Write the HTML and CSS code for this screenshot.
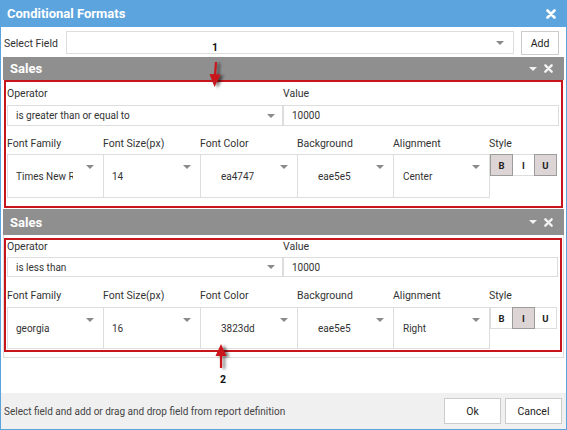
FILE: index.html
```html
<!DOCTYPE html>
<html>
<head>
<meta charset="utf-8">
<link rel="stylesheet" href="styles.css">
</head>
<body>
<div class="dialog">
  <div class="titlebar">
    <span class="title">Conditional Formats</span>
    <svg class="close" width="10" height="10" viewBox="0 0 10 10"><path d="M1.5 1.5 L8.5 8.5 M8.5 1.5 L1.5 8.5" stroke="#fff" stroke-width="2.6" stroke-linecap="round"/></svg>
  </div>
  <div class="content">
    <div class="field-row">
      <span class="field-label">Select Field</span>
      <div class="select field-select"><span class="caret"></span></div>
      <button class="btn add">Add</button>
    </div>

    <div class="section">
      <div class="section-head head1">
        <span class="head-title">Sales</span>
        <span class="head-icons"><span class="tri"></span><svg width="9" height="9" viewBox="0 0 10 10"><path d="M1.5 1.5 L8.5 8.5 M8.5 1.5 L1.5 8.5" stroke="#f2f2f2" stroke-width="2.6" stroke-linecap="round"/></svg></span>
      </div>
      <div class="rule rule1">
        <div class="row1">
          <div class="col"><div class="lbl">Operator</div><div class="select op"><span class="txt">is greater than or equal to</span><span class="caret"></span></div></div>
          <div class="col"><div class="lbl">Value</div><div class="input">10000</div></div>
        </div>
        <div class="row2">
          <div class="col"><div class="lbl">Font Family</div><div class="box"><span class="txt clip">Times New Roman</span><span class="caret top"></span></div></div>
          <div class="col"><div class="lbl">Font Size(px)</div><div class="box"><span class="txt">14</span><span class="caret top"></span></div></div>
          <div class="col"><div class="lbl">Font Color</div><div class="box"><span class="txt color">ea4747</span><span class="caret top"></span></div></div>
          <div class="col"><div class="lbl">Background</div><div class="box"><span class="txt color">eae5e5</span><span class="caret top"></span></div></div>
          <div class="col"><div class="lbl">Alignment</div><div class="box"><span class="txt align">Center</span><span class="caret top"></span></div></div>
          <div class="col"><div class="lbl">Style</div><div class="styles"><span class="sb on">B</span><span class="sb">I</span><span class="sb on">U</span></div></div>
        </div>
      </div>
    </div>

    <div class="section">
      <div class="section-head head2">
        <span class="head-title">Sales</span>
        <span class="head-icons"><span class="tri"></span><svg width="9" height="9" viewBox="0 0 10 10"><path d="M1.5 1.5 L8.5 8.5 M8.5 1.5 L1.5 8.5" stroke="#f2f2f2" stroke-width="2.6" stroke-linecap="round"/></svg></span>
      </div>
      <div class="section-wrap">
        <div class="rule rule2">
          <div class="row1">
            <div class="col"><div class="lbl">Operator</div><div class="select op"><span class="txt">is less than</span><span class="caret"></span></div></div>
            <div class="col"><div class="lbl">Value</div><div class="input">10000</div></div>
          </div>
          <div class="row2">
            <div class="col"><div class="lbl">Font Family</div><div class="box"><span class="txt clip">georgia</span><span class="caret top"></span></div></div>
            <div class="col"><div class="lbl">Font Size(px)</div><div class="box"><span class="txt">16</span><span class="caret top"></span></div></div>
            <div class="col"><div class="lbl">Font Color</div><div class="box"><span class="txt color">3823dd</span><span class="caret top"></span></div></div>
            <div class="col"><div class="lbl">Background</div><div class="box"><span class="txt color">eae5e5</span><span class="caret top"></span></div></div>
            <div class="col"><div class="lbl">Alignment</div><div class="box"><span class="txt align">Right</span><span class="caret top"></span></div></div>
            <div class="col"><div class="lbl">Style</div><div class="styles"><span class="sb">B</span><span class="sb on">I</span><span class="sb">U</span></div></div>
          </div>
        </div>
      </div>
    </div>
  </div>

  <div class="footer">
    <span class="hint">Select field and add or drag and drop field from report definition</span>
    <div class="actions">
      <button class="btn fbtn">Ok</button>
      <button class="btn fbtn">Cancel</button>
    </div>
  </div>

  <span class="num num1">1</span>
  <svg class="arrow arrow1" width="30" height="40" viewBox="0 0 30 40">
    <defs><filter id="sh1" x="-50%" y="-50%" width="200%" height="200%"><feDropShadow dx="3" dy="1" stdDeviation="1.6" flood-color="#000" flood-opacity="0.55"/></filter></defs>
    <g filter="url(#sh1)">
      <path d="M9 2 L8 16" stroke="#c8141b" stroke-width="2.2"/>
      <path d="M2.5 14 L13.5 14.5 L7.5 27 Z" fill="#c8141b"/>
    </g>
  </svg>
  <span class="num num2">2</span>
  <svg class="arrow arrow2" width="30" height="40" viewBox="0 0 30 40">
    <defs><filter id="sh2" x="-50%" y="-50%" width="200%" height="200%"><feDropShadow dx="3" dy="1" stdDeviation="1.6" flood-color="#000" flood-opacity="0.55"/></filter></defs>
    <g filter="url(#sh2)">
      <path d="M8 14 L8 27" stroke="#c8141b" stroke-width="2.2"/>
      <path d="M2.5 15 L13.5 15 L8 3 Z" fill="#c8141b"/>
    </g>
  </svg>
</div>
</body>
</html>
```

FILE: styles.css
```css
* { box-sizing: border-box; }
body {
  margin: 0;
  font-family: Roboto, "Liberation Sans", sans-serif;
  color: #333;
  background: #fff;
}
.dialog {
  position: relative;
  width: 567px;
  height: 430px;
  border: 1px solid #5ba3dc;
  border-top: 0;
  display: flex;
  flex-direction: column;
  background: #fff;
}
.titlebar {
  height: 27px;
  flex: none;
  background: #5ba4dd;
  display: flex;
  align-items: center;
  justify-content: space-between;
  padding: 0 10px 0 6px;
}
.title {
  color: #fff;
  font-weight: bold;
  font-size: 13px;
}
.content {
  padding: 0 2px;
}
.field-row {
  margin-top: 4px;
  height: 24px;
  display: flex;
  align-items: stretch;
  padding-right: 5px;
}
.field-label {
  width: 63px;
  font-size: 10.5px;
  display: flex;
  align-items: center;
  padding-left: 1px;
}
.select, .input {
  position: relative;
  border: 1px solid #ddd;
  background: #fff;
  display: flex;
  align-items: center;
  font-size: 10px;
}
.field-select {
  width: 448px;
  margin-top: 0;
  height: 23px;
}
.caret {
  position: absolute;
  right: 8px;
  top: 50%;
  margin-top: -2px;
  width: 0;
  height: 0;
  border-left: 4px solid transparent;
  border-right: 4px solid transparent;
  border-top: 4px solid #8a8a8a;
}
.field-select .caret { right: 9px; }
.caret.top {
  top: 10px;
  margin-top: 0;
  right: 9px;
}
.btn {
  font-family: Roboto, "Liberation Sans", sans-serif;
  font-size: 10.5px;
  color: #222;
  background: #fff;
  border: 1px solid #ccc;
  padding: 0;
}
.add {
  width: 38px;
  margin-left: 7px;
}
.section-head {
  background: #8f8f8f;
  color: #fff;
  display: flex;
  align-items: center;
  justify-content: space-between;
  padding: 0 11px 0 7px;
}
.head1 { margin-top: 2px; height: 23px; }
.head2 { margin-top: 1px; height: 26px; }
.head-title {
  font-weight: bold;
  font-size: 13px;
}
.head-icons {
  display: flex;
  align-items: center;
  gap: 7px;
}
.tri {
  width: 0;
  height: 0;
  border-left: 4px solid transparent;
  border-right: 4px solid transparent;
  border-top: 4px solid #f2f2f2;
}
.rule {
  border: 2px solid #c8141b;
  padding-left: 1px;
  padding-right: 2px;
}
.rule1 {
  margin: 0 1px;
  padding-top: 5px;
  padding-bottom: 8px;
}
.section-wrap {
  border: 1px solid #ddd;
  border-top: 0;
  padding: 3px 1px 5px 0;
}
.rule2 {
  padding-top: 0;
  padding-bottom: 1px;
}
.lbl {
  font-size: 10.5px;
  line-height: 14px;
  color: #333;
  white-space: nowrap;
}
.row1 {
  display: grid;
  grid-template-columns: 276px 1fr;
}
.row1 .select, .row1 .input {
  margin-top: 4px;
  height: 21px;
  padding-left: 8px;
}
.row1 .select .caret { right: 7px; }
.row2 {
  display: grid;
  grid-template-columns: 96px 97px 97px 96px 96px 1fr;
  margin-top: 11px;
}
.row2 .lbl { margin-bottom: 3px; }
.rule2 .lbl { line-height: 13px; }
.rule2 .row1 .select, .rule2 .row1 .input { height: 20px; }
.rule2 .row2 { margin-top: 12px; }
.rule2 .row2 .lbl { margin-bottom: 5px; }
.box {
  position: relative;
  height: 44px;
  border: 1px solid #ddd;
  display: flex;
  align-items: center;
  font-size: 10px;
  padding-left: 8px;
  margin-right: -1px;
}
.rule2 .box { height: 42px; }
.txt.clip {
  width: 57px;
  overflow: hidden;
  white-space: nowrap;
}
.txt.color { padding-left: 12px; }
.txt.align { padding-left: 1px; }
.styles {
  display: flex;
  margin-left: 1px;
}
.sb {
  width: 23px;
  height: 22px;
  display: flex;
  align-items: center;
  justify-content: center;
  font-size: 9.5px;
  font-weight: bold;
  background: #fff;
  border: 1px solid #ddd;
  color: #222;
}
.sb + .sb { margin-left: -1px; }
.sb.on {
  background: #ddd5d5;
  border-color: #9c9c9c;
  position: relative;
}
.footer {
  margin-top: auto;
  height: 36px;
  background: #f0f0f0;
  display: flex;
  align-items: center;
  justify-content: space-between;
  padding: 0 4px 0 3px;
}
.hint {
  font-size: 10px;
  color: #444;
}
.actions {
  display: flex;
  gap: 4px;
}
.fbtn {
  width: 57px;
  height: 26px;
}
.num {
  position: absolute;
  font-size: 10.5px;
  font-weight: bold;
  color: #111;
}
.num1 { left: 211px; top: 41px; }
.num2 { left: 219px; top: 373px; }
.arrow { position: absolute; overflow: visible; }
.arrow1 { left: 206px; top: 60px; }
.arrow2 { left: 212px; top: 341px; }
```
